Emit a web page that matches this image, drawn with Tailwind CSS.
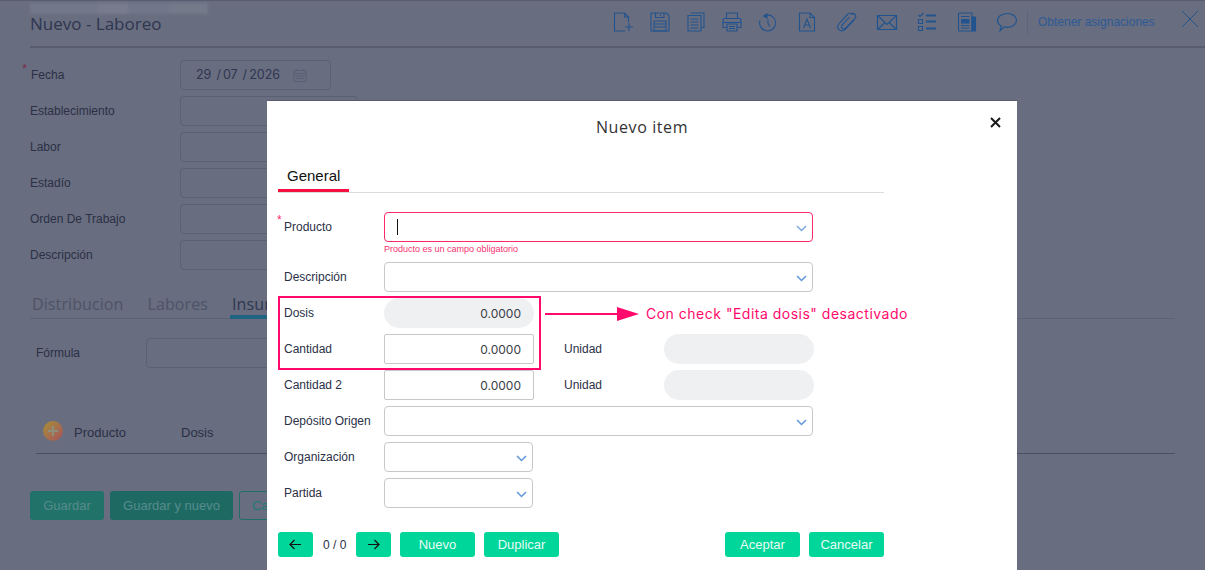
<!DOCTYPE html>
<html lang="es">
<head>
<meta charset="UTF-8">
<title>Nuevo - Laboreo</title>
<script src="https://cdn.jsdelivr.net/npm/@tailwindcss/browser@4"></script>
</head>
<body class="bg-[#686d7f] font-['Liberation_Sans',sans-serif] text-[12px] text-[#2b3046]">
<div class="relative h-[570px] w-[1205px] overflow-hidden">
  <div class="absolute inset-x-0 top-0 h-px bg-[#585c6e]"></div>

  <!-- pagina de fondo -->
  <div class="h-[570px]">
    <div class="relative h-[48px] border-b-2 border-[#585c6e] ml-[30px] flex items-start">
      <div class="absolute left-0 top-[3px] h-[11px] w-[178px] flex blur-[1.5px]">
        <div class="w-[68px] bg-[#737889]"></div>
        <div class="w-[30px] bg-[#777c8c]"></div>
        <div class="w-[42px] bg-[#71768a]"></div>
        <div class="w-[38px] bg-[#757a8a]"></div>
      </div>
      <h1 class="mt-[12px] font-['Open_Sans',sans-serif] text-[17px] leading-[24px] text-[#2f3650]">Nuevo - Laboreo</h1>
      <div class="ml-auto flex items-center text-[#21548f] mt-[9px]">
        <div class="flex items-center h-[26px] gap-[12px]">
          <!-- nuevo -->
          <svg class="w-[24px] h-[24px]" viewBox="0 0 24 24" fill="none" stroke="currentColor" stroke-width="1.100"><path d="M13 21H2.500V3h10l4 4v5"/><path d="M12.500 3v4h4"/><path d="M17 13v8M13 17h8"/></svg>
          <!-- guardar -->
          <svg class="w-[24px] h-[24px]" viewBox="0 0 24 24" fill="none" stroke="currentColor" stroke-width="1.100"><path d="M3 3h15.500L21 5.500V21H3z"/><path d="M7.500 3v4.500h8.500V3M12.500 4.500v1.500"/><path d="M6 11h12v10H6zM6 14h12M6 17h12"/></svg>
          <!-- copiar -->
          <svg class="w-[24px] h-[24px]" viewBox="0 0 24 24" fill="none" stroke="currentColor" stroke-width="1.100"><path d="M7.500 3.500V3H20v14.500h-3"/><path d="M4 5.500h13V21H4z"/><path d="M6.500 9h8M6.500 12h8M6.500 15h8M6.500 18h8"/></svg>
          <!-- imprimir -->
          <svg class="w-[24px] h-[24px]" viewBox="0 0 24 24" fill="none" stroke="currentColor" stroke-width="1.100"><path d="M6.500 8.500V3h11v5.500"/><path d="M7 17.500H3V10a1.500 1.500 0 0 1 1.500-1.500h15A1.500 1.500 0 0 1 21 10v7.500h-4"/><path d="M3 12.500h18"/><path d="M7 14h10v7H7zM9 16.500h6M9 18.500h6"/></svg>
          <!-- historial -->
          <svg class="w-[24px] h-[24px]" viewBox="0 0 24 24" fill="none" stroke="currentColor" stroke-width="1.100"><path d="M10.500 5a8 8 0 1 1-6.500 5.500"/><path d="M12 9.500v4l2 3"/><path d="M11.500 3v6L6.500 6z" fill="currentColor" stroke="none"/></svg>
        </div>
        <div class="flex items-center h-[26px] ml-[15.5px] gap-[16px]">
          <!-- documento A -->
          <svg class="w-[24px] h-[24px]" viewBox="0 0 24 24" fill="none" stroke="currentColor" stroke-width="1.100"><path d="M19.500 7.500V21h-15V3h10.500z"/><path d="M15 3v4.500h4.500"/><path d="M8.500 18l3.500-9 3.500 9M9.700 15h4.600"/></svg>
          <!-- adjuntar -->
          <svg class="w-[24px] h-[24px]" viewBox="0 0 24 24" fill="none" stroke="currentColor" stroke-width="1.100"><path d="M18 4.500c-1.800-1.800-4-1.500-5.500 0l-8 8.500c-2.500 2.800-2 5.300-.6 6.700s4 1.700 6.500-.7l8.600-9"/><path d="M15.500 4c1.500-1 3.500-.5 4.500.5s1 3-.5 4.500l-8 8.500c-1.500 1.500-3.500 1.700-4.400.8s-.6-2.800.9-4.300l6.500-7"/></svg>
          <!-- correo -->
          <svg class="w-[24px] h-[24px]" viewBox="0 0 24 24" fill="none" stroke="currentColor" stroke-width="1.200"><path d="M2.500 5.500h19v14h-19z"/><path d="M2.500 5.500L12 14.500l9.500-9M2.500 19.500l7.500-7M21.500 19.500l-7.500-7"/></svg>
          <!-- lista -->
          <svg class="w-[24px] h-[24px]" viewBox="0 0 24 24" fill="none" stroke="currentColor" stroke-width="1.100"><path d="M3.500 5l1.500 1.500L8.500 3"/><path d="M3.500 9.500h4v4h-4zM3.500 16.500h4v4h-4z"/><path d="M11 5.500h10M11 11.500h10M11 18.500h10" stroke-width="2"/></svg>
          <!-- ficha -->
          <svg class="w-[24px] h-[24px]" viewBox="0 0 24 24" fill="none" stroke="currentColor" stroke-width="1.100"><path d="M4.500 3H17v18H4.500A1 1 0 0 1 3.500 20V4a1 1 0 0 1 1-1z"/><path d="M17 7h3.500v14H17z" fill="currentColor"/><path d="M6 9h8.500v4.500H6z" fill="currentColor" stroke="none"/><path d="M6 6.500h8.500M6 15.500h8.500M6 18h8.500"/></svg>
          <!-- comentario -->
          <svg class="w-[24px] h-[24px]" viewBox="0 0 24 24" fill="none" stroke="currentColor" stroke-width="1.200"><path d="M12.500 3.500c5 0 9 2.800 9 6.800s-4 7-9 7c-1.300 0-2.300-.2-3.300-.4L5 20.800l1.300-4.700c-2.400-1.300-3.800-3.400-3.800-5.800 0-4 4.500-6.800 10-6.800z"/></svg>
        </div>
        <div class="ml-[8px] w-px h-[24px] bg-[#60657a]"></div>
        <span class="ml-[10px] w-[142px] text-[12px] text-[#2d5a96]">Obtener asignaciones</span>
        <svg class="w-[20px] h-[20px] mr-[5px] -mt-[7px]" viewBox="0 0 20 20" fill="none" stroke="currentColor"><path d="M2 2l16 16M18 2L2 18"/></svg>
      </div>
    </div>

    <div class="ml-[30px] mt-[12px] flex flex-col gap-[6px]">
      <div class="relative flex items-center h-[30px]">
        <span class="absolute -left-[8px] -top-[1px] text-[#7a2f4d] text-[13px]">*</span>
        <span class="w-[150px] pl-[1px]">Fecha</span>
        <div class="w-[151px] h-[30px] rounded-[4px] border border-[#5b6073] flex items-center pl-[15px] font-['Inter',sans-serif] text-[12.500px] text-[#2f3650]">
          <span>29</span><span class="ml-[5px]">/</span><span class="ml-[2px]">07</span><span class="ml-[5px]">/</span><span class="ml-[2px]">2026</span>
          <svg class="ml-[13px] w-[14px] h-[14px] text-[#5a5f73]" viewBox="0 0 14 14" fill="none" stroke="currentColor"><path d="M1 2.500h12v11H1zM1 5.500h12M4 1v2M10 1v2M3 8h8M3 10.500h8"/></svg>
        </div>
      </div>
      <div class="flex items-center h-[30px]"><span class="w-[150px]">Establecimiento</span><div class="w-[178px] h-[30px] rounded-[4px] border border-[#5b6073]"></div></div>
      <div class="flex items-center h-[30px]"><span class="w-[150px]">Labor</span><div class="w-[178px] h-[30px] rounded-[4px] border border-[#5b6073]"></div></div>
      <div class="flex items-center h-[30px]"><span class="w-[150px]">Estadío</span><div class="w-[178px] h-[30px] rounded-[4px] border border-[#5b6073]"></div></div>
      <div class="flex items-center h-[30px]"><span class="w-[150px]">Orden De Trabajo</span><div class="w-[178px] h-[30px] rounded-[4px] border border-[#5b6073]"></div></div>
      <div class="flex items-center h-[30px]"><span class="w-[150px]">Descripción</span><div class="w-[178px] h-[30px] rounded-[4px] border border-[#5b6073]"></div></div>
    </div>

    <div class="ml-[30px] mr-[30px] mt-[24px] h-[25px] border-b border-[#5c6174] flex font-['Open_Sans',sans-serif] text-[16px] leading-[20px] tracking-[.1px]">
      <span class="ml-[2px] text-[#4e5367]">Distribucion</span>
      <span class="ml-[24px] text-[#4e5367]">Labores</span>
      <span class="ml-[22px] h-[25px] border-b-[4px] border-[#1f6480] px-[2px] text-[#2f3650]">Insumos</span>
    </div>

    <div class="ml-[36px] mt-[19px] flex items-center h-[30px]">
      <span class="w-[110px]">Fórmula</span>
      <div class="w-[300px] h-[30px] rounded-[4px] border border-[#5b6073]"></div>
    </div>

    <div class="ml-[36px] mt-[37px] mr-[30px] h-[49px] pt-[18px] border-b border-[#4c5063] flex items-start text-[13px]">
      <span class="ml-[7px] -mt-[2px] w-[20px] h-[20px] rounded-full bg-gradient-to-br from-[#a5902f] to-[#a5505a] flex items-center justify-center text-[#8d8f7c]">
        <svg class="w-[12px] h-[12px]" viewBox="0 0 12 12" fill="none" stroke="currentColor" stroke-width="2"><path d="M6 1v10M1 6h10"/></svg>
      </span>
      <span class="ml-[11px] w-[107px]">Producto</span>
      <span>Dosis</span>
    </div>

    <div class="ml-[30px] mt-[37px] flex gap-[6px] text-[13px]">
      <div class="w-[74px] h-[29px] rounded-[3px] bg-[#217369] text-[#578a8d] flex items-center justify-center">Guardar</div>
      <div class="w-[123px] h-[29px] rounded-[3px] bg-[#1e6a63] text-[#578a8d] flex items-center justify-center">Guardar y nuevo</div>
      <div class="w-[90px] h-[29px] rounded-[3px] border border-[#1f6f68] text-[#1f7a78] flex items-center pl-[12px]">Cancelar</div>
    </div>
  </div>

  <!-- modal -->
  <div class="absolute left-[267px] top-[101px] w-[750px] h-[500px] bg-white px-[11px] text-[#2b3046] shadow-[0_-1px_0_#585c6e]">
    <h2 class="pt-[15px] h-[53px] text-center font-['Open_Sans',sans-serif] text-[16px] leading-[22px] tracking-[.6px] text-[#333]">Nuevo item</h2>
    <svg class="absolute left-[723px] top-[16px] w-[11px] h-[11px]" viewBox="0 0 11 11" fill="none" stroke="#1a1a1a" stroke-width="2"><path d="M1 1l9 9M10 1l-9 9"/></svg>

    <div class="h-[39px] w-[606px] border-b border-[#dcdcdc]">
      <div class="w-[71px] h-[38px] pt-[13px] border-b-[3px] border-[#f5103f] pl-[9px] text-[15px] leading-[17px] text-[#111]">General</div>
    </div>

    <div class="mt-[19px]">
      <div class="relative flex items-center h-[30px]">
        <span class="absolute -left-[1px] -top-[1px] text-[#ff2a6d] text-[12px]">*</span>
        <span class="w-[106px] pl-[6px]">Producto</span>
        <div class="relative w-[429px] h-[30px] rounded-[4px] border border-[#fa2a68]">
          <span class="absolute left-[12px] top-[6px] w-px h-[16px] bg-[#111]"></span>
          <svg class="absolute right-[5px] top-[12px] w-[11px] h-[7px]" viewBox="0 0 11 7" fill="none" stroke="#7aa9e0" stroke-width="1.500"><path d="M1 1l4.500 4.500L10 1"/></svg>
        </div>
      </div>
      <p class="ml-[106px] h-[20px] pt-[2px] text-[9px] leading-[11px] text-[#f5326f]">Producto es un campo obligatorio</p>

      <div class="flex flex-col gap-[6px]">
        <div class="flex items-center h-[30px]">
          <span class="w-[106px] pl-[6px]">Descripción</span>
          <div class="relative w-[429px] h-[30px] rounded-[4px] border border-[#c8c8c8]">
            <svg class="absolute right-[5px] top-[12px] w-[11px] h-[7px]" viewBox="0 0 11 7" fill="none" stroke="#5f97da" stroke-width="1.500"><path d="M1 1l4.500 4.500L10 1"/></svg>
          </div>
        </div>
        <div class="flex items-center h-[30px]">
          <span class="w-[106px] pl-[6px] -mt-[1px]">Dosis</span>
          <div class="w-[150px] h-[30px] pt-[1px] rounded-[15px] bg-[#eff0f2] pr-[13px] flex items-center justify-end font-['Inter',sans-serif] text-[12px] text-[#3a3d46]">0.0000</div>
        </div>
        <div class="flex items-center h-[30px]">
          <span class="w-[106px] pl-[6px] -mt-[1px]">Cantidad</span>
          <div class="w-[150px] h-[30px] pt-[1px] rounded-[2px] border border-[#c8c8c8] pr-[12px] flex items-center justify-end font-['Inter',sans-serif] text-[12px] text-[#3a3d46]">0.0000</div>
          <span class="ml-[30px] w-[100px] -mt-[1px]">Unidad</span>
          <div class="w-[150px] h-[30px] rounded-[15px] bg-[#eff0f2]"></div>
        </div>
        <div class="flex items-center h-[30px]">
          <span class="w-[106px] pl-[6px] -mt-[1px]">Cantidad 2</span>
          <div class="w-[150px] h-[30px] pt-[1px] rounded-[2px] border border-[#c8c8c8] pr-[12px] flex items-center justify-end font-['Inter',sans-serif] text-[12px] text-[#3a3d46]">0.0000</div>
          <span class="ml-[30px] w-[100px] -mt-[1px]">Unidad</span>
          <div class="w-[150px] h-[30px] rounded-[15px] bg-[#eff0f2]"></div>
        </div>
        <div class="flex items-center h-[30px]">
          <span class="w-[106px] pl-[6px]">Depósito Origen</span>
          <div class="relative w-[429px] h-[30px] rounded-[4px] border border-[#c8c8c8]">
            <svg class="absolute right-[5px] top-[12px] w-[11px] h-[7px]" viewBox="0 0 11 7" fill="none" stroke="#5f97da" stroke-width="1.500"><path d="M1 1l4.500 4.500L10 1"/></svg>
          </div>
        </div>
        <div class="flex items-center h-[30px]">
          <span class="w-[106px] pl-[6px] -mt-[1px]">Organización</span>
          <div class="relative w-[149px] h-[30px] rounded-[4px] border border-[#c8c8c8]">
            <svg class="absolute right-[5px] top-[12px] w-[11px] h-[7px]" viewBox="0 0 11 7" fill="none" stroke="#5f97da" stroke-width="1.500"><path d="M1 1l4.500 4.500L10 1"/></svg>
          </div>
        </div>
        <div class="flex items-center h-[30px]">
          <span class="w-[106px] pl-[6px] -mt-[1px]">Partida</span>
          <div class="relative w-[149px] h-[30px] rounded-[4px] border border-[#c8c8c8]">
            <svg class="absolute right-[5px] top-[12px] w-[11px] h-[7px]" viewBox="0 0 11 7" fill="none" stroke="#5f97da" stroke-width="1.500"><path d="M1 1l4.500 4.500L10 1"/></svg>
          </div>
        </div>
      </div>

      <div class="mt-[24px] w-[606px] flex items-center text-[13px] text-[#e9fbf5]">
        <div class="w-[35px] h-[25px] pr-[2px] rounded-[3px] bg-[#00d69a] flex items-center justify-center">
          <svg class="w-[12px] h-[11px]" viewBox="0 0 12 11" fill="none" stroke="#111" stroke-width="1.200"><path d="M12 5.500H1M5.500 1L1 5.500 5.500 10"/></svg>
        </div>
        <span class="ml-[10px] w-[33px] text-[12px] text-[#2b3046]">0 / 0</span>
        <div class="w-[35px] h-[25px] rounded-[3px] bg-[#00d69a] flex items-center justify-center">
          <svg class="w-[12px] h-[11px]" viewBox="0 0 12 11" fill="none" stroke="#111" stroke-width="1.200"><path d="M0 5.500h11M6.500 1L11 5.500 6.500 10"/></svg>
        </div>
        <div class="ml-[9px] w-[75px] h-[25px] rounded-[3px] bg-[#00d69a] flex items-center justify-center">Nuevo</div>
        <div class="ml-[9px] w-[75px] h-[25px] rounded-[3px] bg-[#00d69a] flex items-center justify-center">Duplicar</div>
        <div class="ml-auto w-[75px] h-[25px] rounded-[3px] bg-[#00d69a] flex items-center justify-center">Aceptar</div>
        <div class="ml-[9px] w-[75px] h-[25px] rounded-[3px] bg-[#00d69a] flex items-center justify-center">Cancelar</div>
      </div>
    </div>
  </div>

  <!-- anotacion sobre la captura -->
  <div class="absolute left-[278px] top-[296px] w-[263px] h-[74px] border-[2px] border-[#ff0a6c]"></div>
  <svg class="absolute left-[545px] top-[306px] w-[95px] h-[16px]" viewBox="0 0 95 16"><path d="M0 8h73" stroke="#ff0a6c" stroke-width="2"/><path d="M72 1l22 7-22 7z" fill="#ff0a6c"/></svg>
  <span class="absolute left-[646px] top-[305px] font-['Inter',sans-serif] text-[14px] leading-[17px] tracking-[.5px] text-[#ff0a6c]">Con check "Edita dosis" desactivado</span>
</div>
</body>
</html>
